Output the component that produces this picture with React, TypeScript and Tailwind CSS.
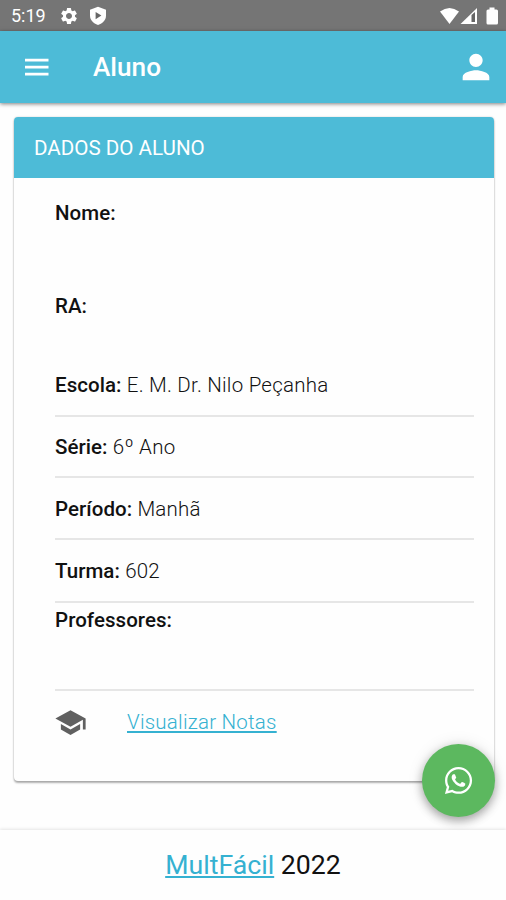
import type { ReactNode } from 'react';
import { FaWhatsapp } from 'react-icons/fa';
import { MdPerson, MdSchool, MdSettings } from 'react-icons/md';

interface FieldProps {
  label: string;
  value?: string;
  className: string;
}

const FIELDS: FieldProps[] = [
  { label: 'Nome:', className: 'h-[92px] pt-[21px]' },
  { label: 'RA:', className: 'h-[84px] pt-[22px]' },
  { label: 'Escola:', value: 'E. M. Dr. Nilo Peçanha', className: 'h-[63px] border-b-2 pt-[17px]' },
  { label: 'Série:', value: '6º Ano', className: 'h-[61px] border-b-2 pt-4' },
  { label: 'Período:', value: 'Manhã', className: 'h-[62px] border-b-2 pt-[17px]' },
  { label: 'Turma:', value: '602', className: 'h-[63px] border-b-2 pt-[17px]' },
  { label: 'Professores:', className: 'h-[88px] border-b-2 pt-[3px]' },
];

const StatusBar = () => (
  <div className="flex h-[31px] shrink-0 items-center justify-between bg-[#757575] pt-px pr-2 pl-[11px] text-white">
    <div className="flex items-center">
      <span className="w-12 text-[18px] leading-none">5:19</span>
      <MdSettings className="size-5" />
      {/* Play Protect */}
      <svg viewBox="0 0 20 20" className="ml-[9px] size-5">
        <path fill="currentColor" d="M10 .8l8 3v5.800c0 4.700-3.200 7.800-8 9.400-4.800-1.600-8-4.700-8-9.400V3.800z" />
        <path fill="#666" d="M7.600 6l5.800 3.600-5.800 3.600z" />
      </svg>
    </div>
    <svg viewBox="0 0 60 20" className="h-5 w-[60px]" fill="currentColor">
      <path d="M2 5.500Q11.500-1.500 21 5.500L11.500 18z" />
      <path d="M22.500 18L39 2v16z" />
      <path fill="#666" d="M33.500 9l3.500-3v10h-3.500z" />
      <path d="M51.500 1.500h5v2h2q1.500 0 1.500 1.500v12q0 1.500-1.500 1.500h-8.500q-1.500 0-1.500-1.500V5q0-1.500 1.500-1.500h1.500z" />
    </svg>
  </div>
);

const AppBar = ({ title }: { title: string }) => (
  <header className="flex h-[72px] shrink-0 items-center bg-[#4dbbd7] pr-[10px] pl-[25px] text-white shadow-[0_1px_4px_rgba(0,0,0,0.5)]">
    <svg viewBox="0 0 24 18" className="h-[18px] w-6" fill="currentColor">
      <path d="M0 .700h23.500v2.700H0zM0 7.700h23.500v2.700H0zM0 14.700h23.500v2.700H0z" />
    </svg>
    <h1 className="ml-11 flex-1 text-[26.200px] leading-8 font-medium">{title}</h1>
    <MdPerson className="size-10" />
  </header>
);

const Field = ({ label, value, className }: FieldProps) => (
  <div className={`border-[#e6e6e6] leading-7 ${className}`}>
    <span className="font-medium tracking-[0.05px]">{label}</span>
    {value && <span className="font-light"> {value}</span>}
  </div>
);

const Card = ({ title, children }: { title: string; children: ReactNode }) => (
  <section className="mr-3 ml-[14px] h-[664px] overflow-hidden rounded-[4px] bg-[#fefefe] shadow-[0_2px_2px_rgba(0,0,0,0.3),0_0_2px_rgba(0,0,0,0.2)]">
    <h2 className="flex h-[61px] items-center bg-[#4dbbd7] pt-px pl-5 text-[20.600px] text-white">{title}</h2>
    <div className="mr-5 ml-[41px] text-[20.500px] tracking-[0.230px] text-[#111]">{children}</div>
  </section>
);

export default function App() {
  return (
    <div className="relative flex h-[900px] w-[506px] flex-col overflow-hidden bg-[#fefefe] font-[Roboto,sans-serif]">
      <StatusBar />
      <AppBar title="Aluno" />

      <main className="flex-1 pt-[14px]">
        <Card title="DADOS DO ALUNO">
          {FIELDS.map((field) => (
            <Field key={field.label} {...field} />
          ))}
          <div className="flex h-[62px] items-center">
            <MdSchool className="-ml-px size-[33px] text-[#606060]" />
            <a href="#" className="ml-10 font-light text-[#35b1d1] underline">Visualizar Notas</a>
          </div>
        </Card>
      </main>

      <footer className="flex h-[70px] shrink-0 items-center justify-center bg-[#fefefe] text-[26.700px] text-[#111] shadow-[0_-1px_3px_rgba(0,0,0,0.1)]">
        <p>
          <a href="#" className="text-[#35b1d1] underline">MultFácil</a> 2022
        </p>
      </footer>

      <button
        aria-label="WhatsApp"
        className="absolute right-[11px] bottom-[83px] flex size-[73px] items-center justify-center rounded-full bg-[#5cb85f] text-white shadow-[0_4px_10px_rgba(0,0,0,0.32),0_0_16px_rgba(0,0,0,0.1)]"
      >
        <FaWhatsapp className="size-[31px]" />
      </button>
    </div>
  );
}
